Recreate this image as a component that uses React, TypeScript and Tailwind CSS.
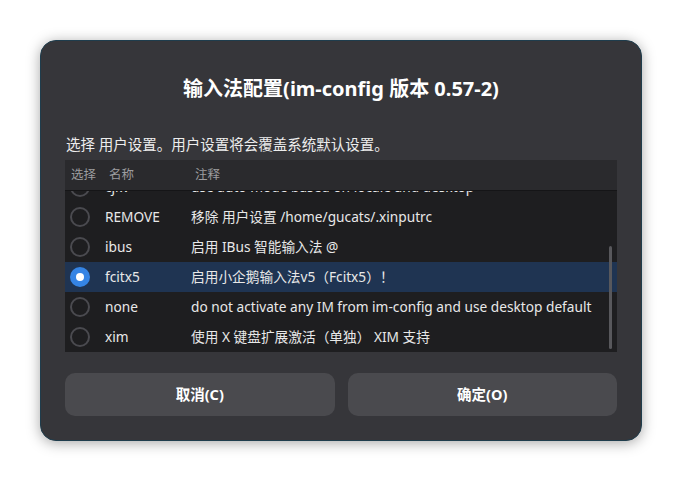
import React from "react"

const rows = [
    { name: "cjkv", note: "use auto mode based on locale and desktop" },
    { name: "REMOVE", note: "移除 用户设置 /home/gucats/.xinputrc" },
    { name: "ibus", note: "启用 IBus 智能输入法 @" },
    { name: "fcitx5", note: "启用小企鹅输入法v5（Fcitx5）！", selected: true },
    { name: "none", note: "do not activate any IM from im-config and use desktop default" },
    { name: "xim", note: "使用 X 键盘扩展激活（单独） XIM 支持" },
]

function Radio({ checked }: { checked?: boolean }) {
    if (checked) {
        return (
            <span className="w-[20px] h-[20px] rounded-full bg-[#3584e4] flex items-center justify-center">
                <span className="w-[8px] h-[8px] rounded-full bg-white" />
            </span>
        )
    }
    return <span className="w-[20px] h-[20px] rounded-full border-2 border-[#4a4a4f]" />
}

export default function App() {
    return (
        <div
            className="w-[682px] h-[482px] bg-white flex items-start justify-center pt-[40px]"
            style={{ fontFamily: '"Noto Sans", "Noto Sans CJK SC", sans-serif' }}
        >
            <div className="w-[602px] h-[401px] bg-[#36363a] rounded-[16px] border border-[#1f3d4d] shadow-[0_2px_14px_rgba(0,0,0,0.35)] flex flex-col px-[24px]">
                <h1 className="text-white text-[20px] font-bold text-center mt-[34px] leading-[28px]">
                    输入法配置(im-config 版本 0.57-2)
                </h1>

                <p className="text-[#ededed] text-[14.5px] mt-[31px] leading-[20px] pl-[1px]">
                    选择 用户设置。用户设置将会覆盖系统默认设置。
                </p>

                <div className="mt-[6px] bg-[#1e1e20] h-[192px] flex flex-col overflow-hidden relative">
                    <div className="h-[31px] shrink-0 bg-[#2a2a2d] border-b border-[#151517] flex items-center text-[12.5px] text-[#9c9c9f] z-10">
                        <span className="w-[44px] pl-[6px]">选择</span>
                        <span className="w-[86px]">名称</span>
                        <span>注释</span>
                    </div>
                    <div className="flex-1 overflow-hidden relative">
                        <div className="mt-[-19px]">
                            {rows.map((r) => (
                                <div
                                    key={r.name}
                                    className={`h-[30px] flex items-center text-[13.7px] text-[#e8e8e8] ${r.selected ? "bg-[#1f3452]" : ""}`}
                                >
                                    <span className="w-[40px] flex justify-start pl-[5px]">
                                        <Radio checked={r.selected} />
                                    </span>
                                    <span className="w-[86px]">{r.name}</span>
                                    <span className="whitespace-nowrap">{r.note}</span>
                                </div>
                            ))}
                        </div>
                        <div className="absolute right-[5px] top-[55px] w-[3px] h-[103px] rounded-full bg-[#58585c]" />
                    </div>
                </div>

                <div className="mt-[21px] grid grid-cols-2 gap-[13px]">
                    <button className="h-[43px] rounded-[10px] bg-[#4a4a4e] text-white text-[14.5px] font-bold">
                        取消(C)
                    </button>
                    <button className="h-[43px] rounded-[10px] bg-[#4a4a4e] text-white text-[14.5px] font-bold">
                        确定(O)
                    </button>
                </div>
            </div>
        </div>
    )
}
